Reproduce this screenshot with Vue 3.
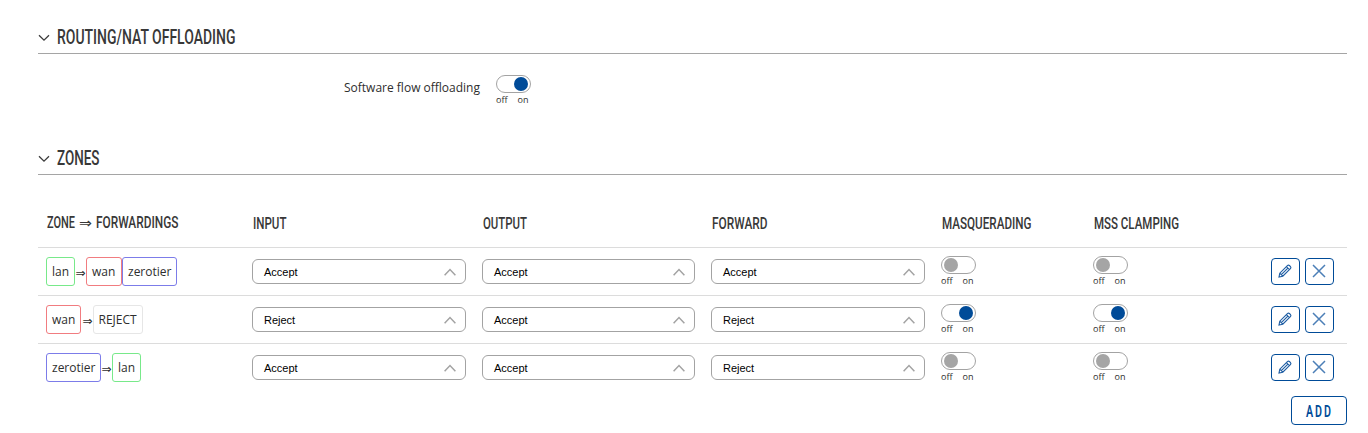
<template>
  <main class="page">
    <section class="offloading">
      <div class="section-title">
        <svg class="chevron" width="12" height="8" viewBox="0 0 12 8"><path d="M1 1.2 L6 6.2 L11 1.2" /></svg>
        <svg class="title-text" width="190" height="26">
          <text x="0" y="19" textLength="178.5" lengthAdjust="spacingAndGlyphs">ROUTING/NAT OFFLOADING</text>
        </svg>
      </div>
      <div class="option">
        <label>Software flow offloading</label>
        <div class="toggle on">
          <div class="track"><i></i></div>
          <div class="states"><span>off</span><span>on</span></div>
        </div>
      </div>
    </section>

    <section>
      <div class="section-title">
        <svg class="chevron" width="12" height="8" viewBox="0 0 12 8"><path d="M1 1.2 L6 6.2 L11 1.2" /></svg>
        <svg class="title-text" width="190" height="26">
          <text x="0" y="19" textLength="42.5" lengthAdjust="spacingAndGlyphs">ZONES</text>
        </svg>
      </div>

      <div class="row head">
        <div v-for="col in columns" :key="col.key" :class="col.key">
          <svg class="head-text" width="140" height="22">
            <text v-for="part in col.parts" :key="part.text" :x="part.x" :y="col.key === 'zone' ? 16 : 17" :textLength="part.width" lengthAdjust="spacingAndGlyphs" :class="{ implies: part.text === '⇒' }">{{ part.text }}</text>
          </svg>
        </div>
      </div>

      <div v-for="zone in zones" :key="zone.name" class="row">
        <div class="forwardings">
          <span class="badge" :class="zone.name">{{ zone.name }}</span>
          <span class="arrow">⇒</span>
          <span v-for="dest in zone.dest" :key="dest" class="badge" :class="dest">{{ dest }}</span>
        </div>
        <div v-for="(policy, i) in zone.policies" :key="i" class="select">
          <span>{{ policy }}</span>
          <svg width="12" height="8" viewBox="0 0 12 8"><path d="M0.6 7.2 L6 1.6 L11.4 7.2" /></svg>
        </div>
        <div v-for="n in 2" :key="'t' + n" class="toggle" :class="{ on: zone.masq }">
          <div class="track"><i></i></div>
          <div class="states"><span>off</span><span>on</span></div>
        </div>
        <div class="actions">
          <button class="icon-btn" aria-label="edit">
            <svg width="14" height="14" viewBox="0 0 14 14">
              <path d="M1 13 L1.8 9.2 L9.4 1.6 Q10.4 .6 11.4 1.5 L12.5 2.6 Q13.4 3.6 12.4 4.6 L4.8 12.2 Z M1.8 9.2 L4.8 12.2 M8.4 2.6 L11.4 5.6 M3.3 10.7 L9.9 4.1" />
            </svg>
          </button>
          <button class="icon-btn remove" aria-label="delete">
            <svg width="14" height="14" viewBox="0 0 14 14"><path d="M1 1 L13 13 M13 1 L1 13" /></svg>
          </button>
        </div>
      </div>
    </section>

    <div class="footer">
      <button class="add-btn">
        <svg width="34" height="24">
          <text x="4" y="18" textLength="27" lengthAdjust="spacingAndGlyphs">ADD</text>
        </svg>
      </button>
    </div>
  </main>
</template>

<script setup>
import { ref } from 'vue'

const columns = [
  { key: 'zone', parts: [
    { text: 'ZONE', x: 0, width: 28 },
    { text: '⇒', x: 32, width: 13 },
    { text: 'FORWARDINGS', x: 49, width: 82.5 }
  ] },
  { key: 'input', parts: [{ text: 'INPUT', x: 0, width: 33.5 }] },
  { key: 'output', parts: [{ text: 'OUTPUT', x: 0, width: 44 }] },
  { key: 'forward', parts: [{ text: 'FORWARD', x: 0, width: 55.5 }] },
  { key: 'masq', parts: [{ text: 'MASQUERADING', x: 0, width: 89.5 }] },
  { key: 'mss', parts: [{ text: 'MSS CLAMPING', x: 0, width: 85 }] }
]

const zones = ref([
  { name: 'lan', dest: ['wan', 'zerotier'], policies: ['Accept', 'Accept', 'Accept'], masq: false },
  { name: 'wan', dest: ['REJECT'], policies: ['Reject', 'Accept', 'Reject'], masq: true },
  { name: 'zerotier', dest: ['lan'], policies: ['Accept', 'Accept', 'Reject'], masq: false }
])
</script>

<style>
body { margin: 0; background: #fff; }
</style>

<style scoped>
.page {
  box-sizing: border-box;
  height: 433px;
  padding: 25px 21px 0 38px;
  font-family: "Open Sans", "Noto Sans", sans-serif;
  font-size: 12px;
  color: #2e2e2e;
  overflow: hidden;
}

svg { display: block; fill: none; overflow: visible; }
text { fill: #383838; font-family: Roboto, "DejaVu Sans", sans-serif; }

.offloading { height: 121px; }

.section-title {
  box-sizing: border-box;
  display: flex;
  gap: 7px;
  height: 29px;
  border-bottom: 1px solid #a5a5a5;
}
.chevron { margin-top: 9px; margin-left: -0.5px; margin-right: 0.5px; stroke: #3c3c3c; stroke-width: 1.3; }
.title-text text { font-size: 20.5px; font-weight: 500; }

.option { display: flex; padding-top: 21px; }
.option label {
  width: 442px;
  margin-right: 16px;
  padding-top: 4px;
  line-height: 18px;
  text-align: right;
}

.toggle { width: 35px; }
.track {
  box-sizing: border-box;
  width: 35px;
  height: 18px;
  padding: 1px 2px;
  display: flex;
  border: 1px solid #a3a3a3;
  border-radius: 9px;
}
.track i {
  width: 14px;
  height: 14px;
  border-radius: 50%;
  background: #a5a5a5;
}
.on .track { justify-content: flex-end; }
.on .track i { background: #004b98; }
.states {
  display: flex;
  justify-content: space-between;
  padding-right: 2.5px;
  font-size: 9px;
  line-height: 13px;
}

.row {
  box-sizing: border-box;
  display: grid;
  grid-template-columns: 214px 230px 229px 230px 152px 178px 1fr;
  height: 48px;
  border-bottom: 1px solid #dcdcdc;
}
.row:last-child { border-bottom: 0; }
.head { height: 73px; padding-top: 37px; }
.head > div { margin-left: 1px; }
.head > .zone { margin-left: 9px; }
.head-text text { font-size: 16.8px; font-weight: 500; }
.head-text .implies { font-size: 14px; }

.forwardings {
  display: flex;
  height: 29px;
  margin: 9px 0 0 8px;
}
.badge {
  box-sizing: border-box;
  height: 29px;
  padding: 0 5px;
  border: 1px solid #e6e6e6;
  border-radius: 3px;
  line-height: 27px;
}
.forwardings .lan { width: 29px; border-color: #78e98a; }
.forwardings .wan { width: 36px; border-color: #f17c80; }
.forwardings .wan:first-child { width: 35px; margin-right: 1px; }
.forwardings .zerotier { width: 55px; border-color: #7c7ce9; }
.forwardings .REJECT { width: 50px; padding-left: 4.5px; }
.arrow {
  width: 11px;
  font: 12px/32px "DejaVu Sans", sans-serif;
  text-align: center;
}

.select {
  box-sizing: border-box;
  display: flex;
  justify-content: space-between;
  width: 214px;
  height: 25px;
  margin-top: 11px;
  padding: 0 9px 0 11px;
  border: 1px solid #a3a3a3;
  border-radius: 6px;
  font: 11px/25px "Liberation Sans", Arial, sans-serif;
  color: #000;
}
.select:nth-child(3) { width: 213px; }
.select svg { margin-top: 8px; stroke: #a3a3a3; stroke-width: 1.5; }

.row .toggle { margin-top: 8px; }

.actions { display: flex; gap: 5px; padding-top: 10px; }
button {
  box-sizing: border-box;
  display: flex;
  align-items: center;
  justify-content: center;
  margin: 0;
  padding: 0;
  border: 1px solid #004b98;
  border-radius: 4px;
  background: #fff;
}
.icon-btn { width: 29px; height: 27px; }
.icon-btn svg { margin-top: -1px; margin-left: -1px; stroke: #1f5ea4; stroke-width: 1.15; }
.icon-btn.remove svg { stroke: #4c7fb7; stroke-width: 1.5; }

.footer { display: flex; justify-content: flex-end; padding-top: 4px; }
.add-btn { width: 56px; height: 29px; }
.add-btn text { fill: #004b98; font-size: 16px; font-weight: 600; letter-spacing: 3px; }
</style>
